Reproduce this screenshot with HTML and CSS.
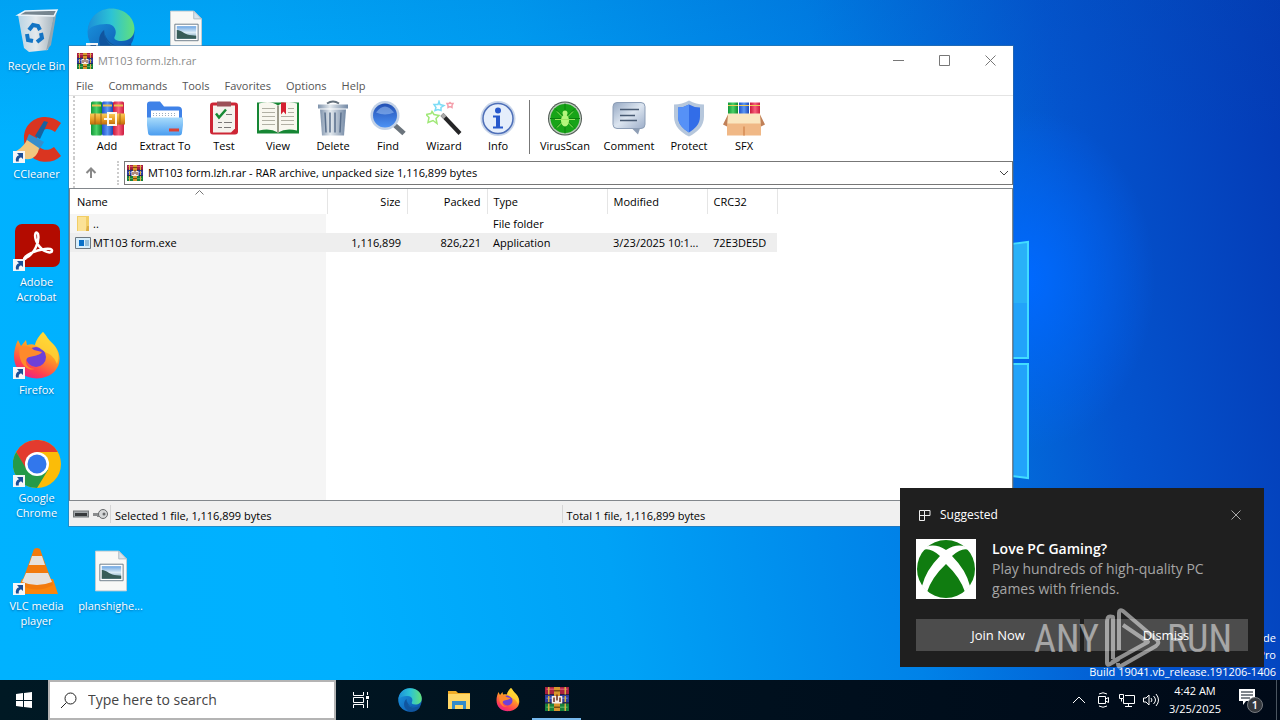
FILE: index.html
```html
<!DOCTYPE html>
<html lang="en">
<head>
<meta charset="utf-8">
<title>Desktop</title>
<link rel="stylesheet" href="styles.css">
</head>
<body>
<svg class="defs" aria-hidden="true">
  <defs>
    <linearGradient id="gEdge" x1="0" y1="0" x2="1" y2="0"><stop offset="0" stop-color="#1c8fd8"/><stop offset=".5" stop-color="#2cc3d6"/><stop offset="1" stop-color="#62e07a"/></linearGradient>
    <linearGradient id="gEdge2" x1="0" y1="0" x2="1" y2="1"><stop offset="0" stop-color="#1b9be4"/><stop offset="1" stop-color="#0c4fa8"/></linearGradient>
    <linearGradient id="gFox" x1=".8" y1="0" x2=".3" y2="1"><stop offset="0" stop-color="#ffe83c"/><stop offset=".45" stop-color="#ff9a26"/><stop offset=".8" stop-color="#ff4050"/><stop offset="1" stop-color="#e8208c"/></linearGradient>
    <linearGradient id="gFold" x1="0" y1="0" x2="0" y2="1"><stop offset="0" stop-color="#a9dcfb"/><stop offset="1" stop-color="#4a9df0"/></linearGradient>
    <linearGradient id="gMetal" x1="0" y1="0" x2="1" y2="0"><stop offset="0" stop-color="#7f93ac"/><stop offset=".4" stop-color="#e3e9ee"/><stop offset="1" stop-color="#7288a4"/></linearGradient>
    <linearGradient id="gLens" x1="0" y1="0" x2="0" y2="1"><stop offset="0" stop-color="#2350b4"/><stop offset="1" stop-color="#4c92f4"/></linearGradient>
    <linearGradient id="gRedB"><stop offset="0" stop-color="#c8183c"/><stop offset=".5" stop-color="#f8607c"/><stop offset="1" stop-color="#cc1c40"/></linearGradient>
    <linearGradient id="gBlueB"><stop offset="0" stop-color="#1f50cc"/><stop offset=".5" stop-color="#5c98f4"/><stop offset="1" stop-color="#1c48b8"/></linearGradient>
    <linearGradient id="gGreenB"><stop offset="0" stop-color="#109838"/><stop offset=".5" stop-color="#4cd068"/><stop offset="1" stop-color="#0c8a2c"/></linearGradient>
    <linearGradient id="gBelt" x1="0" y1="0" x2="0" y2="1"><stop offset="0" stop-color="#f9cc5c"/><stop offset=".5" stop-color="#eaa028"/><stop offset="1" stop-color="#c06c0c"/></linearGradient>
    <linearGradient id="gPhoto" x1="0" y1="0" x2="0" y2="1"><stop offset="0" stop-color="#6ba4e2"/><stop offset=".5" stop-color="#dcecf6"/><stop offset="1" stop-color="#6795ae"/></linearGradient>
    <linearGradient id="gBubble" x1="0" y1="0" x2="1" y2="1"><stop offset="0" stop-color="#94a7c2"/><stop offset=".5" stop-color="#dce5f0"/><stop offset="1" stop-color="#9cadc8"/></linearGradient>
    <linearGradient id="gBin" x1="0" y1="0" x2="1" y2="0"><stop offset="0" stop-color="#b8d3e4"/><stop offset=".5" stop-color="#e4e9ec"/><stop offset="1" stop-color="#a6b4be"/></linearGradient>
    <symbol id="i-shortcut" viewBox="0 0 12 12"><path d="M0 0h12v12H0z" fill="#f4f6f8"/><path d="M4 2h6v6L8 6.300C6 7 5.500 8.500 5.800 10.500H3C2.300 7 3.500 5 6 4.200z" fill="#1c4f96"/></symbol>
    <symbol id="i-rar" viewBox="0 0 16 16"><path d="M0 0h16v5H0z" fill="#a82040"/><path d="M1 1h14v1H1z" fill="#d8506c"/><path d="M0 5h16v6H0z" fill="#2c3c9c"/><path d="M1 7h14v1H1z" fill="#5f74d0"/><path d="M0 11h16v5H0z" fill="#177f3c"/><path d="M1 13h14v1H1z" fill="#4cac5c"/><path d="M0 5h16M0 10.500h16" stroke="#2a1c30" stroke-width=".600"/><path d="M2 0h1v5H2zM13 0h1v5h-1zM2 6h1v4H2zM13 6h1v4h-1zM2 11h1v5H2zM13 11h1v5h-1z" fill="#d8b040"/><path d="M6 0h4v16H6z" fill="#d8962c"/><path d="M6 2h4v1H6zM6 13h4v1H6z" fill="#7c4c10"/><path d="M4.500 6h7v5h-7z" fill="#f6ece6"/><path d="M5.500 7h1v3h-1zM7.500 5h1v4h-1zM9.500 7h1v3h-1z" fill="#6b2c1c"/></symbol>
    <symbol id="i-edge" viewBox="0 0 48 48"><circle cx="24" cy="24" r="23.500" fill="url(#gEdge2)"/><path d="M1 23C2 9 12 .500 24 .500 38 .500 47.500 10 47.500 21c0 8-6 12-13 12-5 0-8-2-7-4 3-5 1-13-8-13C10 16 2 19 1 23z" fill="url(#gEdge)"/><path d="M17 22c-7 5-8 20 7 25 8 2 16-2 20-9 1-2-.500-2.500-2-1.500C31 42 18 35 17 22z" fill="#10559f"/><path d="M18 21c-3 10 6 19 17 17-8 3-19-2-17-17z" fill="#1976b6"/></symbol>
    <symbol id="i-photo" viewBox="0 0 33 42"><path d="M.500.500h24l8 8v33H.500z" fill="#f8f8f6" stroke="#c4ccd2"/><path d="M24.500.500v8h8z" fill="#d8e3eb" stroke="#aebbc4"/><path d="M5 14h24v17H5z" fill="#fff" stroke="#6d7d89"/><path d="M7 16h20v13H7z" fill="url(#gPhoto)"/><path d="M7 20c4-.500 7 4 13 5l7 1v3H7z" fill="#385d58"/></symbol>
    <symbol id="i-firefox" viewBox="0 0 48 48"><path d="M30 0c4 4 5 8 9 11 9 8 10 20 3 28-8 9-25 10-34 2C-1 33-.500 19 5 8l3 6 5-6 1 5c3-1 6-1 8 0 1-5 4-9 8-13z" fill="url(#gFox)"/><circle cx="23" cy="25" r="10" fill="#6f40d8"/><path d="M30 0c4 4 5 8 9 11 6 6 8 14 5 21-2-5-5-9-10-11-4-2-7-5-12-8 1-5 4-9 8-13z" fill="#ffd836" opacity=".75"/><path d="M7 15c7-2 11 0 14 3l8 2c-2 3-5 3-8 4-3 1-6 0-8 4-1 6 4 9 9 9-9 3-18-8-15-22z" fill="#ff8a2c"/></symbol>
    <symbol id="i-bug" viewBox="0 0 32 32"><g fill="#b4f67c"><ellipse cx="16" cy="18" rx="4" ry="6"/><circle cx="16" cy="10.500" r="2.500"/></g><path d="M8 9l5 5M24 9l-5 5M6 17h20M8 25l5-5M24 25l-5-5" stroke="#99e460" fill="none"/></symbol>
  </defs>
</svg>

<main class="desktop">
  <svg class="wallpaper-panes" viewBox="0 0 120 240" aria-hidden="true"><path d="M1 16L119 2v116H1zM1 124h118v114L1 224z" fill="#22a3fa" stroke="#42dcff" stroke-width="2"/><path d="M104 5l14-2v60h-14z" fill="#2fc0f5" opacity=".5"/></svg>

  <ul class="icons">
    <li><svg viewBox="0 0 48 48"><path d="M5 7L12 3l32-1-3 6z" fill="#76858f"/><path d="M5 7l36 1-6 34-19 2-5-4z" fill="url(#gBin)"/><path d="M41 8l3-6-6 35-5 6z" fill="#94a6b1"/><path d="M5 7l36 1 3-6-32 1z" fill="none" stroke="#edf5fa" stroke-width="1.500"/><path d="M16 22l4-5 5 1 2 4M28 25l1 5-5 4M20 33l-5-1-1-6" fill="none" stroke="#1374c4" stroke-width="4"/></svg><span>Recycle Bin</span></li>
    <li><svg viewBox="0 0 48 48"><path d="M48 7C35-5 10 1 11 24s26 27 37 16l-7-9c-8 6-17 2-17-8s11-13 18-7z" fill="#da3520"/><path d="M31 5l4 1-8 17-5-3z" fill="#17629f"/><path d="M16 18l15 8-5 8-13-9z" fill="#378ecb"/><path d="M14 24l12 8c-1 8-8 14-17 10L0 36c5-1 10-5 14-12z" fill="#f1c77f"/></svg><svg class="shortcut"><use href="#i-shortcut"/></svg><span>CCleaner</span></li>
    <li><svg viewBox="0 0 48 48"><rect x="2" y="0" width="45" height="43" rx="7" fill="#b30b00"/><path d="M13 34c8-4 14-16 12-24-3-5-5 4 1 12 4 6 13 8 13 5 1-4-13-2-21 2-8 4-8 8-5 5z" fill="none" stroke="#fff" stroke-width="2.500"/></svg><svg class="shortcut"><use href="#i-shortcut"/></svg><span>Adobe Acrobat</span></li>
    <li><svg><use href="#i-firefox"/></svg><svg class="shortcut"><use href="#i-shortcut"/></svg><span>Firefox</span></li>
    <li><svg viewBox="0 0 48 48"><circle cx="24" cy="24" r="24" fill="#fbbc08"/><path d="M3.200 12A24 24 0 0 1 44.800 12H24L13 30z" fill="#e33b2e"/><path d="M3.200 12A24 24 0 0 0 24 48l11-18H14z" fill="#259a48"/><circle cx="24" cy="24" r="12" fill="#fff"/><circle cx="24" cy="24" r="9.500" fill="#3277ec"/></svg><svg class="shortcut"><use href="#i-shortcut"/></svg><span>Google Chrome</span></li>
    <li><svg viewBox="0 0 48 48"><path d="M9 31h31l5 15H3z" fill="#fb850c"/><path d="M21 1q3-2 6 0l13 36q-16 9-32 0z" fill="#f27a0c"/><path d="M19 8h10l3 9H16zM13 25h22l4 9q-15 6-30 0z" fill="#e6e1dc"/></svg><svg class="shortcut"><use href="#i-shortcut"/></svg><span>VLC media player</span></li>
    <li class="edge"><svg><use href="#i-edge"/></svg><svg class="shortcut"><use href="#i-shortcut"/></svg></li>
    <li class="plans"><svg><use href="#i-photo" x="8" y="2" width="32" height="42"/></svg><span>planshighe...</span></li>
    <li class="photo"><svg><use href="#i-photo" x="8" y="2" width="32" height="42"/></svg></li>
  </ul>

  <p class="build">Test Mode<br>Windows 10 Pro<br>Build 19041.vb_release.191206-1406</p>

  <section class="window" aria-label="MT103 form.lzh.rar">
    <header class="titlebar"><svg class="rar"><use href="#i-rar"/></svg><h1>MT103 form.lzh.rar</h1>
      <button aria-label="Minimize"><svg viewBox="0 0 11 11"><path d="M0 5.500h11"/></svg></button>
      <button aria-label="Maximize"><svg viewBox="0 0 11 11"><path d="M.500.500h10v10H.500z"/></svg></button>
      <button aria-label="Close"><svg viewBox="0 0 11 11"><path d="M.500.500l10 10M10.500.500l-10 10"/></svg></button>
    </header>
    <nav class="menu"><button>File</button><button>Commands</button><button>Tools</button><button>Favorites</button><button>Options</button><button>Help</button></nav>
    <div class="toolbar">
      <button class="w52"><svg viewBox="0 0 36 36"><rect x="2" y="1" width="11" height="34" rx="1.500" fill="url(#gGreenB)"/><rect x="13" y="1" width="11" height="34" rx="1.500" fill="url(#gBlueB)"/><rect x="24" y="1" width="11" height="34" rx="1.500" fill="url(#gRedB)"/><path d="M3 5h9M14 5h9M25 5h9" stroke="#e9c152" stroke-width="2"/><path d="M1 13h35v11H1z" fill="url(#gBelt)"/><path d="M6 13v11M12 13v11M31 13v11" stroke="#9c6410"/><path d="M19 12.500h8v12h-8zM15 18.500h8" fill="none" stroke="#fff8ea" stroke-width="2"/></svg>Add</button>
      <button class="w64"><svg viewBox="0 0 36 36"><path d="M0 4q0-3 3-3h10l4 5h14q4 0 4 4v10H0z" fill="#3f82e8"/><path d="M4 10h28v12H4z" fill="#fff"/><path d="M6 13h24M6 15h24" stroke="#9cafc0" stroke-dasharray="1 2"/><path d="M-1 17h38l-2 15q0 3-3 3H4q-3 0-3-3z" fill="url(#gFold)"/><path d="M22 28h10v3H22z" fill="#dc4134"/></svg>Extract To</button>
      <button class="w54"><svg viewBox="0 0 36 36"><rect x="4" y="2" width="28" height="32" rx="3" fill="#cd2635"/><path d="M7 5h22v23l-4 4H7z" fill="#f5f3ee"/><path d="M11 1h14v5H11z" fill="#9c5058"/><path d="M10 13l3 4 7-8" fill="none" stroke="#178a35" stroke-width="2.500"/><path d="M20 14h6M12 22h4M18 22h8M12 27h4M18 27h7" stroke="#7b7777"/></svg>Test</button>
      <button class="w54"><svg class="wide" viewBox="0 0 42 36"><path d="M0 2h42v31H0z" fill="#168634"/><path d="M2 3q11-4 19 2 8-6 19-2v27q-11-3-19 2-8-5-19-2z" fill="#f8f7ef"/><path d="M21 5v27" stroke="#9d9b8c" stroke-width="2"/><path d="M5 8h13M5 12h13M5 16h13M5 20h13M5 24h13M24 16h13M24 20h13M24 24h13M31 8h6M31 12h6" stroke="#b1b0a4"/><path d="M24 2h5v12l-2.500-3-2.500 3z" fill="#d51f30"/></svg>View</button>
      <button class="w56"><svg viewBox="0 0 36 36"><path d="M12 3q6-4 12 0" fill="none" stroke="#65717c" stroke-width="2"/><path d="M3 4h30v4H3z" fill="url(#gMetal)"/><path d="M5 9h26l-2 26H7z" fill="url(#gMetal)"/><path d="M10 12l1 20M15 12v20M20 12v20M26 12l-1 20" stroke="#596f8c" stroke-width="1.500"/></svg>Delete</button>
      <button class="w54"><svg viewBox="0 0 36 36"><path d="M24 24l10 9" stroke="#6b747c" stroke-width="5"/><circle cx="15" cy="15" r="14.500" fill="#c3d2e6"/><circle cx="15" cy="15" r="12" fill="url(#gLens)"/><path d="M6 12q9-12 18 0-9 4-18 0z" fill="#b3d4fb" opacity=".45"/></svg>Find</button>
      <button class="w58"><svg viewBox="0 0 36 36"><path d="M16 14l18 19" stroke="#252527" stroke-width="4"/><path d="M16 14l3 3" stroke="#a9a9a9" stroke-width="4"/><g fill="#fff" stroke-width="1.500"><path d="M6 11l2 3 5 1-3 3 1 5-4-3-5 2 1-5-3-3 5-1z" stroke="#a0e878"/><path d="M13 1l1 3 4 1-3 2v3l-3-1-3 1 1-3-2-3h4z" stroke="#7cdcf6"/><path d="M24 2l1 1h2l-1 2v2l-2-1-2 1v-2l-1-2h2z" stroke="#f4a0ac"/></g></svg>Wizard</button>
      <button class="w50"><svg viewBox="0 0 36 36"><circle cx="18" cy="18" r="17.500" fill="#c9d6ea"/><circle cx="18" cy="18" r="15" fill="#e5eefb" stroke="#4e6fb8" stroke-width="1.500"/><circle cx="18" cy="10" r="3" fill="#2758cc"/><path d="M13 15h7v11h3v2H13v-2h3v-9h-3z" fill="#2758cc"/></svg>Info</button>
      <i class="divider"></i>
      <button class="w60"><svg viewBox="0 0 36 36"><circle cx="18" cy="18" r="17" fill="#4c5650"/><circle cx="18" cy="18" r="16" fill="#bcccbc"/><circle cx="18" cy="18" r="14.500" fill="#18a418"/><path d="M3 18h30M18 3v30M8 8l20 20M28 8L8 28" stroke="#0c800f"/><use href="#i-bug" x="2" y="2" width="32" height="32"/></svg>VirusScan</button>
      <button class="w68"><svg viewBox="0 0 36 36"><rect x="2" y="2" width="32" height="26" rx="4" fill="url(#gBubble)" stroke="#8d9eb6"/><path d="M21 28h8l-2 6z" fill="#8e9eb5"/><path d="M9 9h19M9 15h15M9 20h17" stroke="#485a72" stroke-width="1.500"/></svg>Comment</button>
      <button class="w52"><svg viewBox="0 0 36 36"><path d="M18 0q7 4 15 4v12c0 10-7 16-15 20C10 32 3 26 3 16V4q8 0 15-4z" fill="#b6c7dc"/><path d="M18 4q5 3 11 3v9c0 8-5 12-11 16C12 28 7 24 7 16V7q6 0 11-3z" fill="#326de8"/><path d="M18 4v28C12 28 7 24 7 16V7q6 0 11-3z" fill="#5691f7"/></svg>Protect</button>
      <button class="w58"><svg class="wide" viewBox="0 0 42 36"><path d="M5 2h10v14H5z" fill="url(#gGreenB)"/><path d="M16 2h10v14H16z" fill="url(#gBlueB)"/><path d="M27 2h10v14H27z" fill="url(#gRedB)"/><path d="M5 5h10M16 5h10M27 5h10" stroke="#edcb58"/><path d="M4 16h34v19H4z" fill="#f0b886"/><path d="M5 13h32l2 10H3z" fill="#fae6c0"/><path d="M5 14L0 24l4 2zM37 14l5 10-4 2z" fill="#c08058"/><path d="M20 26h2v9h-2z" fill="#dc9660"/></svg>SFX</button>
    </div>
    <div class="location">
      <button class="up" aria-label="Up one level"><svg viewBox="0 0 12 12"><path d="M6 11V2M1.500 6L6 1.500 10.500 6"/></svg></button>
      <div class="combo"><svg class="rar"><use href="#i-rar"/></svg><select aria-label="Archive path"><option>MT103 form.lzh.rar - RAR archive, unpacked size 1,116,899 bytes</option></select><svg class="chev" viewBox="0 0 10 6"><path d="M1 1l4 4 4-4"/></svg></div>
    </div>
    <div class="list">
      <svg class="sort" viewBox="0 0 9 5"><path d="M.500 4.500l4-4 4 4"/></svg>
      <table>
        <thead><tr><th class="c-name">Name</th><th class="c-num">Size</th><th class="c-num">Packed</th><th class="c-type">Type</th><th class="c-mod">Modified</th><th class="c-crc">CRC32</th></tr></thead>
        <tbody>
          <tr><td class="file"><svg viewBox="0 0 16 16"><path d="M2 0h12v15H2z" fill="#f2ce66"/><path d="M3 1h8v14H3z" fill="#fbe296"/><path d="M12 10h2v5h-3z" fill="#dcae45"/></svg>..</td><td></td><td></td><td>File folder</td><td></td><td></td></tr>
          <tr class="selected"><td class="file"><svg viewBox="0 0 16 16"><path d="M.500 2.500h15v11H.500z" fill="#d8eefb" stroke="#6c7881"/><path d="M4 5h5v6H4z" fill="#0870c8"/><path d="M10 6h4M10 8h4M10 10h4" stroke="#5390ba"/></svg>MT103 form.exe</td><td class="num">1,116,899</td><td class="num">826,221</td><td>Application</td><td>3/23/2025 10:1...</td><td>72E3DE5D</td></tr>
        </tbody>
      </table>
    </div>
    <footer class="status">
      <div class="lights"><svg viewBox="0 0 36 12"><rect x=".500" y="3" width="15" height="6" fill="#a2a7aa" stroke="#727678"/><path d="M2 5h12v3H2z" fill="#36393c"/><path d="M20 5h8v3h-2v1h-2V8h-4z" fill="#8a8c8e"/><circle cx="30" cy="6" r="4.500" fill="#d5d7d8" stroke="#66696b"/><circle cx="31" cy="6" r="1.500" fill="#66696b"/></svg></div>
      <div class="cell">Selected 1 file, 1,116,899 bytes</div><div class="cell">Total 1 file, 1,116,899 bytes</div>
    </footer>
  </section>

  <aside class="toast">
    <header><svg viewBox="0 0 12 12"><path d="M.500 1.500h5v10h-5zM.500 6.500h10M5.500 1.500h5.500v5H5.500"/></svg><span>Suggested</span><button aria-label="Close notification"><svg viewBox="0 0 10 10"><path d="M.500.500l9 9M9.500.500l-9 9"/></svg></button></header>
    <div class="message">
      <svg viewBox="0 0 60 60"><path d="M0 0h60v60H0z" fill="#fff"/><circle cx="30" cy="30" r="29" fill="#107c10"/><path d="M10 8q9-4 20 3 11-7 20-3l3 3q-7-3-17 6 14 14 18 30l-5 6Q44 38 30 25 16 38 11 53l-5-6Q10 31 24 17 14 8 7 11z" fill="#fff"/></svg>
      <div><h2>Love PC Gaming?</h2><p>Play hundreds of high-quality PC games with friends.</p></div>
    </div>
    <div class="actions"><button>Join Now</button><button>Dismiss</button></div>
  </aside>

  <div class="brand"><span>ANY</span><svg viewBox="0 0 56 62"><g fill="none" stroke="#fff" stroke-width="4" stroke-linejoin="round"><path d="M8 51V9q-6-2-6 4v42q0 3 3 1l9-5"/><path d="M14 42V5q0-4 4-2l34 29q3 3-1 6L16 58q-3 2-3-3"/><path d="M18 17l25 17-36 20"/></g></svg><span>RUN</span></div>
</main>

<footer class="taskbar">
  <button class="start" aria-label="Start"><svg viewBox="0 0 16 16"><path d="M0 2l7-1v7H0zM8 1l8-1v8H8zM0 9h7v6l-7-1zM8 9h8v7l-8-1z" fill="#fff"/></svg></button>
  <label class="search"><svg viewBox="0 0 17 17"><circle cx="10.500" cy="6.500" r="5.500"/><path d="M6.500 10.500L1 16"/></svg><input type="text" placeholder="Type here to search" aria-label="Search"></label>
  <button aria-label="Task View"><svg class="s16 line" viewBox="0 0 16 16"><path d="M.500 0v3.500h10V0M.500 16v-3.500h10V16M.500 5.500h10v5H.500zM14.500 0v3M14.500 8v8"/><path d="M13 4h3v3h-3z" fill="#fff" stroke="none"/></svg></button>
  <button aria-label="Microsoft Edge"><svg viewBox="0 0 48 48"><use href="#i-edge"/></svg></button>
  <button aria-label="File Explorer"><svg viewBox="0 0 24 24"><path d="M1 3h8l2 2h12v16H1z" fill="#f1ad27"/><path d="M1 6h22v15H1z" fill="#ffd767"/><path d="M5 13h14v8H5z" fill="#348bcb"/><path d="M8 17h8v4H8z" fill="#ffd767"/></svg></button>
  <button aria-label="Firefox"><svg><use href="#i-firefox"/></svg></button>
  <button class="active" aria-label="WinRAR"><svg><use href="#i-rar"/></svg></button>
  <div class="tray">
    <button aria-label="Show hidden icons"><svg class="s16 line" viewBox="0 0 16 16"><path d="M2 11l6-6 6 6"/></svg></button>
    <button aria-label="Meet Now"><svg class="s16 line" viewBox="0 0 16 16"><path d="M3.500 4.500h7v7h-7zM10.500 7l3-1.500v5L10.500 9M4 2q4-2.500 8 0M4 14q4 2.500 8 0"/></svg></button>
    <button aria-label="Network"><svg class="s16 line" viewBox="0 0 16 16"><path d="M6 3.500h9.500v8H4.500V7M.500 2.500h4v4h-4zM2.500 6.500v3M9.500 11.500v3M6 14.500h7"/></svg></button>
    <button aria-label="Volume"><svg class="s16 line" viewBox="0 0 16 16"><path d="M.500 6H3l3-3v10l-3-3H.500zM8 6q2 2 0 4M10.500 4q4 4 0 8M13 2q5 6 0 12"/></svg></button>
    <time>4:42 AM<br>3/25/2025</time>
    <button class="notice" aria-label="Notifications"><svg viewBox="0 0 26 26"><path d="M2 2h16v12H9l-3 4v-4H2z" fill="#fff"/><path d="M4 5h12M4 8h12M4 11h9" stroke="#000c18"/><circle cx="18" cy="18" r="7.500" fill="#34383d" stroke="#777b80"/></svg><b>1</b></button>
  </div>
</footer>
</body>
</html>
```
FILE: styles.css
```css
* { box-sizing: border-box; }
body {
  margin: 0;
  min-height: 100vh;
  display: flex;
  flex-direction: column;
  overflow: hidden;
  font: 11px/16px "Open Sans", "Noto Sans", sans-serif;
  color: #000;
}
button { font: inherit; color: inherit; background: none; border: 0; padding: 0; }
h1, h2, p, ul { margin: 0; padding: 0; font-size: inherit; font-weight: normal; }
svg { display: block; flex: none; }
.defs { position: absolute; width: 0; height: 0; }

.desktop {
  position: relative;
  flex: 1;
  background:
    radial-gradient(ellipse 130px 170px at 1025px 280px, #0069ff, #0069ff00),
    linear-gradient(0deg, #0098ff00 80%, #0050b028),
    linear-gradient(80deg, #00b2ff 0%, #00b0ff 25%, #00a2f6 45%, #0082e8 66%, #0454ce 83%, #0439b4 100%);
}
.wallpaper-panes { position: absolute; right: 251px; top: 240px; width: 120px; height: 240px; }

.icons {
  list-style: none;
  display: grid;
  grid-template: repeat(6, 108px) / 73px 75px 75px;
  grid-auto-flow: column;
  color: #fff;
  text-align: center;
  line-height: 15px;
  text-shadow: 0 1px 2px #003c7899;
}
.icons li { position: relative; display: flex; flex-direction: column; align-items: center; gap: 2px; padding-top: 8px; }
.icons li > svg { width: 48px; height: 48px; }
.icons li > .shortcut { position: absolute; left: 13px; top: 43px; width: 12px; height: 12px; }
.icons span { width: 72px; }
.edge { grid-area: 1 / 2; }
.plans { grid-area: 6 / 2; }
.photo { grid-area: 1 / 3; }
.build { position: absolute; right: 4px; bottom: 0; color: #fff; text-align: right; line-height: 17px; }

.window {
  position: absolute;
  left: 69px;
  right: 267px;
  top: 46px;
  bottom: 154px;
  display: flex;
  flex-direction: column;
  background: #fff;
  outline: 1px solid #3a6f9c88;
}
.rar { width: 16px; height: 16px; }
.titlebar { display: flex; align-items: center; height: 29px; padding-left: 8px; color: #8c8c8c; }
.titlebar h1 { flex: 1; margin-left: 5px; }
.titlebar button { width: 46px; height: 28px; display: grid; place-items: center; }
.titlebar button svg { width: 11px; height: 11px; fill: none; stroke: #777; }
.menu { display: flex; gap: 15px; padding: 3px 7px 1px; color: #555; border-bottom: 1px solid #e4e4e4; }
.toolbar { display: flex; height: 62px; margin-left: 4px; padding: 4px 0 0 6px; border-left: 2px dotted #ccc; }
.toolbar button { display: flex; flex-direction: column; align-items: center; gap: 1px; white-space: nowrap; }
.toolbar svg { width: 36px; height: 37px; }
.toolbar svg.wide { width: 42px; }
.w50 { width: 50px; } .w52 { width: 52px; } .w54 { width: 54px; } .w56 { width: 56px; }
.w58 { width: 58px; } .w60 { width: 60px; } .w64 { width: 64px; } .w68 { width: 68px; }
.divider { width: 1px; height: 54px; margin: 0 5px 0 6px; background: #777; }
.location { display: flex; height: 30px; margin-left: 4px; padding: 3px 0; border-left: 2px dotted #ccc; }
.up { width: 44px; display: grid; place-items: center; padding-right: 10px; border-right: 2px dotted #ccc; }
.up svg { width: 12px; height: 12px; fill: none; stroke: #888; stroke-width: 2; }
.combo { flex: 1; display: flex; align-items: center; margin-left: 5px; padding: 0 3px 0 2px; border: 1px solid #777; }
.combo select { flex: 1; appearance: none; border: 0; background: none; font: inherit; color: #000; padding: 0 5px; }
.combo .chev { width: 10px; height: 6px; fill: none; stroke: #444; }
.list {
  position: relative;
  flex: 1;
  border: 1px solid #82878c;
  background: linear-gradient(#fff 25px, #f5f5f5 25px) 0 0 / 256px 100% no-repeat;
}
.sort { position: absolute; left: 125px; top: 1px; width: 9px; height: 5px; fill: none; stroke: #777; }
table { width: 707px; table-layout: fixed; border-collapse: collapse; }
th, td { height: 19px; padding: 0 6px; text-align: left; font-weight: normal; line-height: 18px; white-space: nowrap; }
th { height: 25px; border-right: 1px solid #e5e5e5; }
.c-name { width: 257px; padding-left: 7px; }
.c-num { width: 80px; text-align: right; }
.c-type { width: 120px; }
.c-mod { width: 100px; }
.c-crc { width: 70px; }
.num { text-align: right; }
.file { display: flex; align-items: center; gap: 2px; padding-left: 5px; }
.file svg { width: 16px; height: 16px; }
.selected { background: #eee; }
.status { display: flex; height: 25px; padding: 4px 0 3px; background: #f0f0f0; }
.lights { width: 42px; padding: 3px 4px; border-right: 1px solid #d5d5d5; }
.lights svg { width: 36px; height: 12px; }
.cell { flex: 1; padding: 0 4px; line-height: 21px; }
.cell + .cell { border-left: 1px solid #d5d5d5; }

.toast {
  position: absolute;
  right: 16px;
  bottom: 13px;
  width: 364px;
  height: 179px;
  padding: 16px;
  display: flex;
  flex-direction: column;
  background: #1f1f1f;
  color: #fff;
  font-size: 14px;
  line-height: 20px;
}
.toast header { display: flex; align-items: center; height: 21px; padding: 0 7px 0 3px; gap: 9px; font-size: 12px; }
.toast header span { flex: 1; }
.toast header svg { width: 12px; height: 12px; fill: none; stroke: #eee; }
.toast header button svg { width: 10px; height: 10px; stroke: #aaa; }
.message { display: flex; gap: 16px; margin-top: 14px; }
.message svg { width: 60px; height: 60px; }
.message h2 { font-weight: 600; }
.message p { color: #a5a5a5; }
.actions { display: flex; gap: 4px; margin-top: auto; }
.actions button { flex: 1; height: 32px; background: #4c4c4c; font-size: 13px; }
.brand {
  position: absolute;
  right: 48px;
  bottom: 10px;
  display: flex;
  align-items: center;
  gap: 6px;
  color: #fff;
  opacity: .5;
  font: 38px/60px "Liberation Sans Narrow", "Roboto Condensed", Roboto, sans-serif;
  pointer-events: none;
}
.brand svg { width: 56px; height: 62px; }

.taskbar { display: flex; height: 40px; background: linear-gradient(90deg, #001924, #00101e 60%, #000a18); color: #fff; }
.taskbar > button { width: 49px; display: grid; place-items: center; }
.taskbar > button svg { width: 24px; height: 24px; }
.taskbar > .start { width: 48px; }
.taskbar > .start svg, .taskbar > button .s16 { width: 16px; height: 16px; }
.s16 { width: 16px; height: 16px; }
.line { fill: none; stroke: #fff; }
.search { display: flex; align-items: center; gap: 11px; width: 288px; padding: 0 10px; background: #fff; border: 2px solid #b4b4b4; }
.search svg { width: 17px; height: 17px; fill: none; stroke: #222; }
.search input { flex: 1; min-width: 0; border: 0; padding: 0; background: none; outline: 0; font: 14px/20px "Open Sans", sans-serif; }
.search input::placeholder { color: #444; opacity: 1; }
.active { border-bottom: 2px solid #76b9ed; }
.tray { display: flex; align-items: center; margin-left: auto; margin-right: 3px; padding-right: 13px; border-right: 1px solid #4a5560; }
.tray button { width: 24px; display: grid; place-items: center; }
.tray time { width: 64px; text-align: center; line-height: 18px; }
.tray .notice { position: relative; width: 36px; padding-left: 10px; }
.notice svg { width: 26px; height: 26px; }
.notice b { position: absolute; right: 5px; bottom: 0; font-weight: 600; }
```
